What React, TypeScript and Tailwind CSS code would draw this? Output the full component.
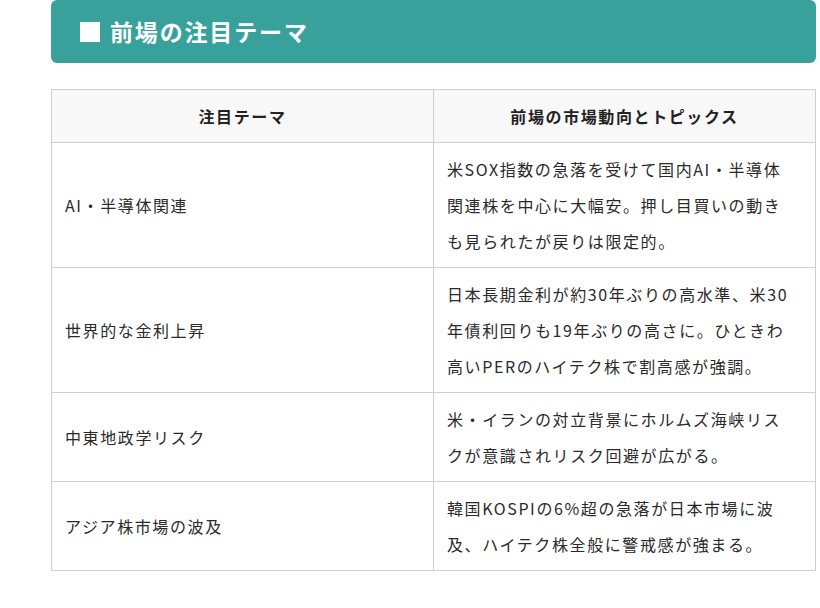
type ThemeRow = {
  readonly theme: string
  readonly topic: string
}

const rows: ThemeRow[] = [
  {
    theme: "AI・半導体関連",
    topic:
      "米SOX指数の急落を受けて国内AI・半導体関連株を中心に大幅安。押し目買いの動きも見られたが戻りは限定的。",
  },
  {
    theme: "世界的な金利上昇",
    topic:
      "日本長期金利が約30年ぶりの高水準、米30年債利回りも19年ぶりの高さに。ひときわ高いPERのハイテク株で割高感が強調。",
  },
  {
    theme: "中東地政学リスク",
    topic: "米・イランの対立背景にホルムズ海峡リスクが意識されリスク回避が広がる。",
  },
  {
    theme: "アジア株市場の波及",
    topic: "韓国KOSPIの6%超の急落が日本市場に波及、ハイテク株全般に警戒感が強まる。",
  },
]

export default function App() {
  return (
    <div className="min-h-[608px] w-[820px] bg-white pl-[51px] pr-[4px] font-['Noto_Sans_CJK_JP','Noto_Sans',sans-serif] text-[#2a2a2a]">
      <h2 className="flex h-[63px] items-center rounded-[6px] bg-[#39a19c] pl-[29px] text-[23px] font-bold tracking-[0.08em] text-white">
        <span className="mr-[10px] inline-block h-[20px] w-[20px] bg-white" aria-hidden="true" />
        前場の注目テーマ
      </h2>
      <table className="mt-[26px] w-[765px] table-fixed border-collapse text-[16px] tracking-[0.1em]">
        <thead>
          <tr>
            <th className="w-1/2 border border-[#cfcfcf] bg-[#f8f8f8] px-[14px] py-[8px] text-center text-[16px] font-bold leading-[36px] text-[#222]">
              注目テーマ
            </th>
            <th className="w-1/2 border border-[#cfcfcf] bg-[#f8f8f8] px-[14px] py-[8px] text-center text-[16px] font-bold leading-[36px] text-[#222]">
              前場の市場動向とトピックス
            </th>
          </tr>
        </thead>
        <tbody>
          {rows.map((row) => (
            <tr key={row.theme}>
              <td className="border border-[#cfcfcf] px-[13px] py-[8px] align-middle leading-[36px]">
                {row.theme}
              </td>
              <td className="border border-[#cfcfcf] py-[8px] pl-[13px] pr-[22px] align-top leading-[36px]">
                {row.topic}
              </td>
            </tr>
          ))}
        </tbody>
      </table>
    </div>
  )
}
